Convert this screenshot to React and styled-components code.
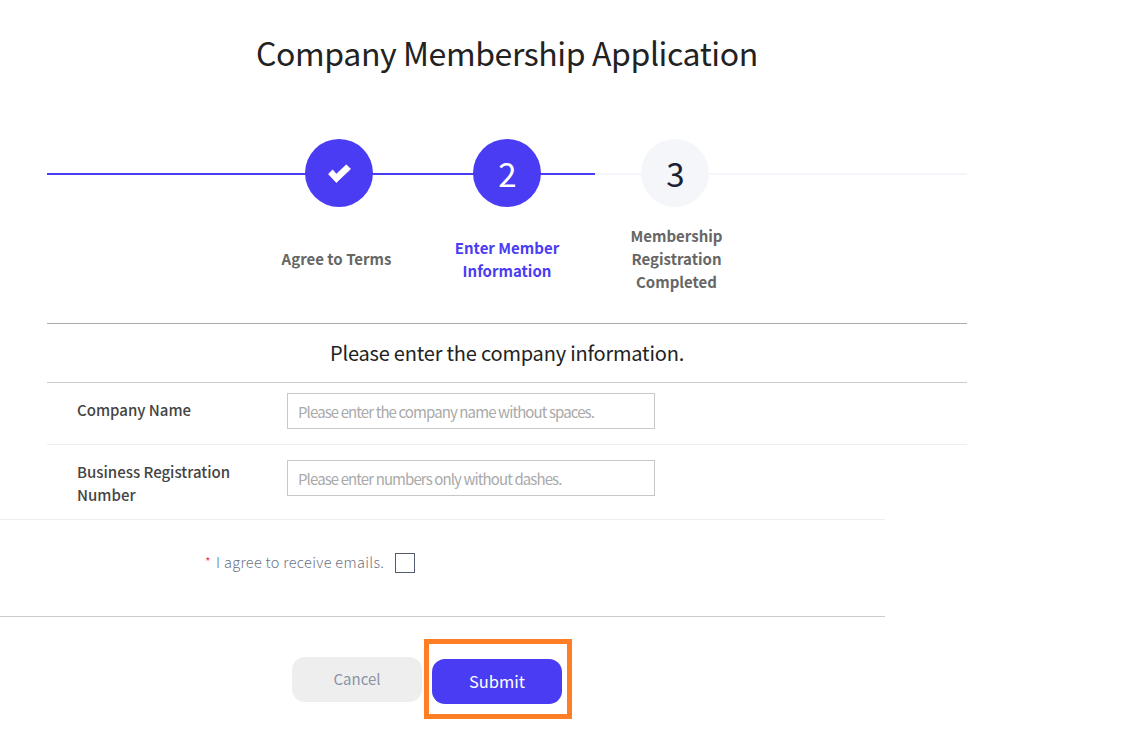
import React from "react";
import styled, { createGlobalStyle } from "styled-components";

const PURPLE = "#4a3cf3";

const GlobalStyle = createGlobalStyle`
  html, body {
    margin: 0;
    padding: 0;
    background: #fff;
  }
  body {
    font-family: "Noto Sans CJK KR", "Noto Sans", sans-serif;
    color: #222;
  }
`;

const Page = styled.div`
  width: 1138px;
  height: 739px;
  overflow: hidden;
`;

const Container = styled.div`
  width: 920px;
  margin-left: 47px;
`;

const Title = styled.h1`
  margin: 0;
  padding-top: 28px;
  height: 109px;
  box-sizing: border-box;
  font-size: 32px;
  line-height: 48px;
  font-weight: 400;
  letter-spacing: -0.4px;
  text-align: center;
  color: #222;
`;

const Stepper = styled.ol`
  position: relative;
  list-style: none;
  margin: 0;
  padding: 30px 0 29px;
  display: flex;
  justify-content: center;

  &::before {
    content: "";
    position: absolute;
    top: 64px;
    left: 0;
    width: 100%;
    height: 2px;
    background: #f4f5fa;
  }

  &::after {
    content: "";
    position: absolute;
    top: 64px;
    left: 0;
    width: 548px;
    height: 2px;
    background: ${PURPLE};
  }
`;

const Step = styled.li`
  position: relative;
  z-index: 1;
  width: 168px;
  display: flex;
  flex-direction: column;
  align-items: center;
  gap: 17px;
`;

const Circle = styled.div`
  width: 68px;
  height: 68px;
  border-radius: 50%;
  display: flex;
  align-items: center;
  justify-content: center;
  font-size: 33px;
  padding-left: 1px;
  box-sizing: border-box;
  background: ${(p) => (p.$on ? PURPLE : "#f4f6fa")};
  color: ${(p) => (p.$on ? "#fff" : "#1a2233")};
`;

const StepLabel = styled.div`
  height: 69px;
  width: 130px;
  margin-left: ${(p) => p.$nudge || 0}px;
  margin-bottom: 1px;
  display: flex;
  align-items: center;
  justify-content: center;
  text-align: center;
  font-size: 15px;
  line-height: 23px;
  font-weight: 700;
  color: ${(p) => (p.$on ? PURPLE : "#666")};
`;

const SectionHead = styled.h2`
  margin: 0;
  height: 58px;
  line-height: 58px;
  border-top: 1px solid #aaa;
  border-bottom: 1px solid #ccc;
  font-size: 20px;
  font-weight: 400;
  letter-spacing: -0.2px;
  text-align: center;
  color: #222;
`;

const FormRow = styled.div`
  display: flex;
  align-items: flex-start;
  height: ${(p) => p.$height}px;
  box-sizing: border-box;
  padding-left: 30px;
  border-bottom: ${(p) => (p.$line ? "1px solid #eee" : "0")};
`;

const FieldLabel = styled.label`
  width: 210px;
  padding-right: 40px;
  box-sizing: border-box;
  margin-top: ${(p) => p.$top}px;
  font-size: 15px;
  line-height: 23px;
  font-weight: 500;
  color: #444;
`;

const TextInput = styled.input`
  width: 368px;
  height: 36px;
  box-sizing: border-box;
  margin-top: ${(p) => p.$top}px;
  padding: 0 10px;
  border: 1px solid #c8c8c8;
  border-radius: 0;
  outline: none;
  font-family: inherit;
  font-size: 15px;
  letter-spacing: -0.9px;

  &::placeholder {
    color: #aaa;
    opacity: 1;
  }
`;

const Agree = styled.div`
  width: 885px;
  height: 98px;
  box-sizing: border-box;
  border-top: 1px solid #eee;
  border-bottom: 1px solid #ccc;
  padding: 0 0 14px 205px;
  display: flex;
  align-items: center;
  font-size: 14.5px;
  font-weight: 300;
  letter-spacing: 0.33px;
  color: #6b7385;
`;

const Star = styled.span`
  color: #f0141e;
  margin-right: 5px;
  font-size: 13px;
`;

const CheckBox = styled.input`
  appearance: none;
  width: 20px;
  height: 20px;
  margin: 4px 0 0 11px;
  box-sizing: border-box;
  border: 1.5px solid #555b6e;
  background: #fff;
`;

const Actions = styled.div`
  display: flex;
  align-items: flex-start;
  padding: 22px 0 0 292px;
`;

const Button = styled.button`
  width: 130px;
  height: 45px;
  border: 0;
  border-radius: 13px;
  padding: 0 0 2px;
  font-family: inherit;
  font-size: ${(p) => (p.$primary ? 16.5 : 15)}px;
  font-weight: 400;
  background: ${(p) => (p.$primary ? PURPLE : "#eee")};
  color: ${(p) => (p.$primary ? "#fff" : "#8a94a6")};
`;

const CancelButton = styled(Button)`
  margin: 18px 2px 0 0;
`;

const Highlight = styled.div`
  border: 5px solid #fd7e24;
  padding: 15px 5px 10px 3px;
`;

const CheckMark = () => (
  <svg width="23" height="19" viewBox="0 0 23 19">
    <polygon
      points="0.5,10 8.3,18.5 22.5,5 18.3,0.8 8.3,10.2 4.7,5.9"
      fill="#fff"
      stroke="#fff"
      strokeWidth="0.8"
      strokeLinejoin="round"
    />
  </svg>
);

const STEPS = [
  { icon: <CheckMark />, label: "Agree to Terms", on: true, nudge: -5 },
  { icon: "2", label: "Enter Member Information", on: true, active: true },
  { icon: "3", label: "Membership Registration Completed", nudge: 3 },
];

export default function App() {
  return (
    <Page>
      <GlobalStyle />
      <Container>
        <Title>Company Membership Application</Title>
        <Stepper>
          {STEPS.map((s) => (
            <Step key={s.label}>
              <Circle $on={s.on}>{s.icon}</Circle>
              <StepLabel $on={s.active} $nudge={s.nudge}>{s.label}</StepLabel>
            </Step>
          ))}
        </Stepper>
        <SectionHead>Please enter the company information.</SectionHead>
        <FormRow $height={62} $line>
          <FieldLabel $top={15}>Company Name</FieldLabel>
          <TextInput $top={10} placeholder="Please enter the company name without spaces." />
        </FormRow>
        <FormRow $height={74}>
          <FieldLabel $top={15}>Business Registration Number</FieldLabel>
          <TextInput $top={15} placeholder="Please enter numbers only without dashes." />
        </FormRow>
      </Container>
      <Agree>
        <Star>*</Star>
        I agree to receive emails.
        <CheckBox type="checkbox" />
      </Agree>
      <Actions>
        <CancelButton>Cancel</CancelButton>
        <Highlight>
          <Button $primary>Submit</Button>
        </Highlight>
      </Actions>
    </Page>
  );
}
